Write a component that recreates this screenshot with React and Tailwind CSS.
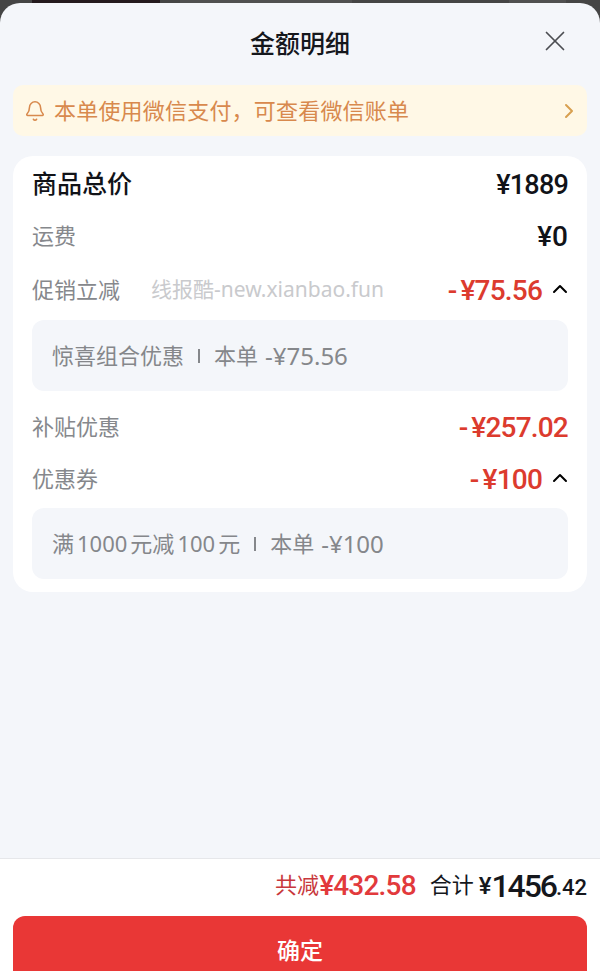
import { Bell, ChevronRight, ChevronUp, X } from 'lucide-react'

const FONT = "font-['Roboto','Noto_Sans_CJK_SC',sans-serif]"
const NOTO = "font-['Noto_Sans','Noto_Sans_CJK_SC',sans-serif]"

function Price({ value }) {
  return (
    <span className="flex items-center text-[28px] leading-8 font-medium tracking-[-0.8px] text-[#dc3b2e]">
      <span className="mr-1">-</span>
      <span>¥{value}</span>
    </span>
  )
}

function Row({ label, value, open, className = '' }) {
  return (
    <div className={`flex items-center justify-between ${className}`}>
      <span className="text-[22px] leading-8 text-[#86888c]">{label}</span>
      <div className="flex items-center">
        <Price value={value} />
        {open && <ChevronUp className="ml-[6px] w-6 h-6 text-black -mt-1 -mr-1" strokeWidth={2} />}
      </div>
    </div>
  )
}

function Detail({ amount, children, className = '' }) {
  return (
    <div className={`h-[71px] rounded-xl bg-[#f4f6fa] px-5 flex items-center text-[22px] text-[#85878b] ${NOTO} ${className}`}>
      {children}
      <span className="mx-[14px] w-[2px] h-[14px] bg-[#85878b]" />
      <span>本单</span>
      <span className="ml-[7px] text-[24px] leading-8">-¥{amount}</span>
    </div>
  )
}

export default function App() {
  return (
    <div className={`h-[971px] overflow-hidden bg-[#454545] ${FONT}`}>
      {/* page behind the sheet, only its last pixels show */}
      <div className="h-[3px] flex pl-[32px]">
        <div className="w-[128px] bg-[#241a1e]" />
        <div className="ml-5 w-[172px] bg-[#505050]" />
        <div className="ml-[157px] w-[57px] bg-[#505050]" />
      </div>
      <div className="h-[968px] flex flex-col rounded-t-[20px] bg-[#f4f6fa]">
        {/* Header */}
        <div className="h-[82px] shrink-0 relative flex items-center justify-center pt-[2px]">
          <h1 className="text-[25px] font-medium text-[#15171c]">金额明细</h1>
          <X className="absolute left-[538px] top-[21px] w-[34px] h-[34px] text-[#4b4d52]" strokeWidth={1.2} />
        </div>

        {/* Notice */}
        <div className="mx-[13px] h-[51px] shrink-0 rounded-[10px] bg-[#fff8e6] flex items-center pl-[11px] pr-[6px] text-[#d8894d]">
          <Bell className="w-[22px] h-[22px] mr-2" strokeWidth={1.7} />
          <span className="text-[22px] tracking-[0.2px] flex-1 mt-[2px]">本单使用微信支付，可查看微信账单</span>
          <ChevronRight className="w-6 h-6 text-[#d8a050]" strokeWidth={2} />
        </div>

        {/* Amounts */}
        <div className="relative mx-[13px] mt-5 h-[436px] shrink-0 rounded-[20px] bg-white px-[19px] pt-[13px]">
          <div className="flex items-center justify-between h-8">
            <span className="text-[25px] font-medium text-[#111318]">商品总价</span>
            <span className="text-[27px] font-medium tracking-[-0.8px] text-[#111318]">¥1889</span>
          </div>
          <div className="flex items-center justify-between h-8 mt-5">
            <span className="text-[22px] -mt-[2px] text-[#86888c]">运费</span>
            <span className="text-[28px] font-medium text-[#111318]">¥0</span>
          </div>
          <Row label="促销立减" value="75.56" open className="mt-[22px]" />
          <Detail amount="75.56" className="mt-[13px]">
            <span>惊喜组合优惠</span>
          </Detail>
          <Row label="补贴优惠" value="257.02" className="mt-[21px]" />
          <Row label="优惠券" value="100" open className="mt-5" />
          <Detail amount="100" className="mt-3">
            <span>满</span>
            <span className="mx-[3px]">1000</span>
            <span>元减</span>
            <span className="mx-[3px]">100</span>
            <span>元</span>
          </Detail>
          <span className={`absolute left-[138px] top-[117px] text-[21px] leading-8 text-[#c9cacd] ${NOTO}`}>线报酷-new.xianbao.fun</span>
        </div>

        {/* Footer */}
        <div className="mt-auto h-[113px] shrink-0 bg-white border-t border-[#e6e7ea] px-[13px]">
          <div className="h-[53px] flex items-center justify-end">
            <span className="text-[22px] text-[#c8383c]">共减</span>
            <span className="text-[28px] font-medium tracking-[-0.8px] text-[#e23a3c]">¥432.58</span>
            <span className="ml-[14px] text-[22px] text-[#15171c]">合计</span>
            <span className="ml-[5px] text-[24px] font-medium text-[#15171c]">¥</span>
            <span className="text-[32px] font-medium tracking-[-2.1px] text-[#15171c]">1456</span>
            <span className="text-[22px] font-medium text-[#15171c] mt-[3px]">.42</span>
          </div>
          <button className="mt-1 w-full h-[70px] rounded-xl bg-[#e93736] text-white text-[23px] font-medium pt-[2px]">确定</button>
        </div>
      </div>
    </div>
  )
}
